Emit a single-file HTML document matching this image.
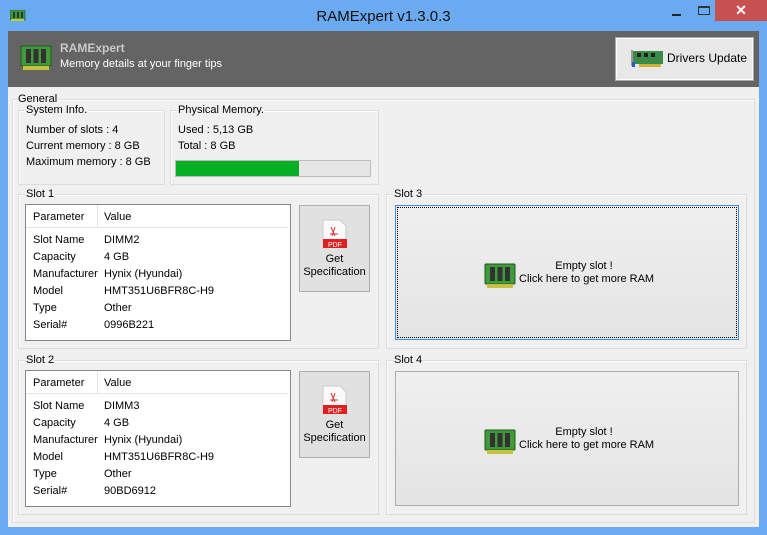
<!DOCTYPE html><html><head><style>
*{margin:0;padding:0;box-sizing:border-box}
body{width:767px;height:535px;background:#6aaaf0;font-family:"Liberation Sans",Arial,sans-serif;font-size:11px;color:#000;position:relative;overflow:hidden}
.a{position:absolute}
.grp{position:absolute;border:1px solid #dcdcdc;box-shadow:inset 1px 1px 0 #fff}
.lbl{position:absolute;background:#f0f0f0;padding:0 1px;line-height:12px;top:-7px;left:6px}
.t{position:absolute;white-space:nowrap;line-height:13px}
.lv{position:absolute;background:#fff;border:1px solid #828790}
.btn{position:absolute;border:1px solid #adadad;background:#e1e1e1;text-align:center}
.empty{position:absolute;border:1px solid #adadad;background:linear-gradient(#efefef,#e4e4e4)}
</style></head><body>
<svg class="a" style="left:10px;top:10px" width="16" height="12"><rect x="0" y="0" width="15" height="10" fill="#3a9a3a" stroke="#235" stroke-width=".5"/><rect x="3" y="2" width="2" height="6" fill="#333"/><rect x="7" y="2" width="2" height="6" fill="#333"/><rect x="11" y="2" width="2" height="6" fill="#333"/><rect x="1" y="9" width="13" height="2" fill="#c8c840"/></svg>
<div class="t" style="left:0;width:767px;text-align:center;top:8px;font-size:15px;line-height:17px;color:#111">RAMExpert v1.3.0.3</div>
<div class="a" style="left:672px;top:14px;width:9px;height:2px;background:#222"></div>
<div class="a" style="left:698px;top:6px;width:12px;height:9px;border:1px solid #333;border-top-width:2px"></div>
<div class="a" style="left:715px;top:0;width:52px;height:21px;background:#c75050;color:#fff;text-align:center;font-size:14px;line-height:21px;font-weight:bold">✕</div>
<div class="a" style="left:8px;top:31px;width:751px;height:496px;background:#f0f0f0"></div>
<div class="a" style="left:8px;top:31px;width:751px;height:56px;background:#646464"></div>
<svg class="a" style="left:20px;top:45px" width="32" height="26"><rect x="1" y="1" width="30" height="20" rx="1" fill="#3f9a3a" stroke="#1e5a1e"/><rect x="6" y="4" width="5" height="14" fill="#333"/><rect x="13.5" y="4" width="5" height="14" fill="#333"/><rect x="21" y="4" width="5" height="14" fill="#333"/><rect x="3" y="21" width="26" height="4" fill="#c8c040"/></svg>
<div class="t" style="left:60px;top:42px;font-weight:bold;color:#c8c8c8;font-size:12px">RAMExpert</div>
<div class="t" style="left:60px;top:58px;color:#fff">Memory details at your finger tips</div>
<div class="a" style="left:616px;top:38px;width:137px;height:42px;border:1px solid #fff;outline:1px solid #aaa;background:#e8e8e8"></div>
<svg class="a" style="left:631px;top:48px" width="34" height="22"><rect x="2" y="3" width="30" height="13" fill="#3a8a4a"/><rect x="6" y="5" width="4" height="4" fill="#222"/><rect x="13" y="5" width="4" height="4" fill="#222"/><rect x="20" y="5" width="4" height="4" fill="#222"/><rect x="0" y="2" width="2" height="16" fill="#999"/><rect x="8" y="16" width="22" height="3" fill="#d4b030"/><rect x="1" y="14" width="3" height="5" fill="#35c"/></svg>
<div class="t" style="left:667px;top:52px;font-size:12px">Drivers Update</div>

<div class="grp" style="left:12px;top:99px;width:743px;height:424px"><div class="lbl" style="left:4px">General</div></div>
<div class="grp" style="left:18px;top:110px;width:147px;height:75px"><div class="lbl">System Info.</div></div>
<div class="t" style="left:26px;top:124px">Number of slots : 4</div>
<div class="t" style="left:26px;top:140px">Current memory : 8 GB</div>
<div class="t" style="left:26px;top:156px">Maximum memory : 8 GB</div>
<div class="grp" style="left:170px;top:110px;width:209px;height:75px"><div class="lbl">Physical Memory.</div></div>
<div class="t" style="left:178px;top:124px">Used : 5,13 GB</div>
<div class="t" style="left:178px;top:140px">Total : 8 GB</div>
<div class="a" style="left:175px;top:160px;width:196px;height:17px;background:#e6e6e6;border:1px solid #bcbcbc"><div style="width:123px;height:15px;background:#06b025"></div></div>

<div class="grp" style="left:18px;top:194px;width:361px;height:155px"><div class="lbl">Slot 1</div></div>
<div class="lv" style="left:25px;top:204px;width:266px;height:137px">
<div class="a" style="left:0;top:0;width:262px;height:23px;border-bottom:1px solid #e5e5e5"></div>
<div class="a" style="left:71px;top:0;width:1px;height:23px;background:#e5e5e5"></div>
<div class="t" style="left:7px;top:6px">Parameter</div><div class="t" style="left:78px;top:6px">Value</div>
<div class="t" style="left:7px;top:29px">Slot Name</div><div class="t" style="left:78px;top:29px">DIMM2</div>
<div class="t" style="left:7px;top:46px">Capacity</div><div class="t" style="left:78px;top:46px">4 GB</div>
<div class="t" style="left:7px;top:63px">Manufacturer</div><div class="t" style="left:78px;top:63px">Hynix (Hyundai)</div>
<div class="t" style="left:7px;top:80px">Model</div><div class="t" style="left:78px;top:80px">HMT351U6BFR8C-H9</div>
<div class="t" style="left:7px;top:97px">Type</div><div class="t" style="left:78px;top:97px">Other</div>
<div class="t" style="left:7px;top:114px">Serial#</div><div class="t" style="left:78px;top:114px">0996B221</div>
</div>
<div class="btn" style="left:299px;top:205px;width:71px;height:87px">
<svg style="position:absolute;left:22px;top:13px" width="26" height="30"><path d="M1 1h17l6 6v16H1z" fill="#fafafa" stroke="#ccc"/><path d="M9 8l4 9M13 8l-3 9M8 15h8" stroke="#d33" fill="none"/><rect x="1" y="20" width="24" height="9" fill="#e02020"/><text x="13" y="28" font-size="7" fill="#fff" text-anchor="middle" font-family="Liberation Sans">PDF</text></svg>
<div class="t" style="left:0;width:69px;top:47px">Get<br>Specification</div></div>

<div class="grp" style="left:386px;top:194px;width:361px;height:155px"><div class="lbl">Slot 3</div></div>
<div class="empty" style="left:395px;top:205px;width:344px;height:135px;border:1px solid #3c8ce0;outline:1px dotted #000;outline-offset:-3px"></div>
<svg class="a" style="left:484px;top:263px" width="32" height="26"><rect x="1" y="1" width="30" height="20" rx="1" fill="#3f9a3a" stroke="#1e5a1e"/><rect x="6" y="4" width="5" height="14" fill="#333"/><rect x="13.5" y="4" width="5" height="14" fill="#333"/><rect x="21" y="4" width="5" height="14" fill="#333"/><rect x="3" y="21" width="26" height="4" fill="#c8c040"/></svg>
<div class="t" style="left:519px;top:260px;width:130px;text-align:center">Empty slot !<br>Click here to get more RAM</div>

<div class="grp" style="left:18px;top:360px;width:361px;height:155px"><div class="lbl">Slot 2</div></div>
<div class="lv" style="left:25px;top:370px;width:266px;height:137px">
<div class="a" style="left:0;top:0;width:262px;height:23px;border-bottom:1px solid #e5e5e5"></div>
<div class="a" style="left:71px;top:0;width:1px;height:23px;background:#e5e5e5"></div>
<div class="t" style="left:7px;top:6px">Parameter</div><div class="t" style="left:78px;top:6px">Value</div>
<div class="t" style="left:7px;top:29px">Slot Name</div><div class="t" style="left:78px;top:29px">DIMM3</div>
<div class="t" style="left:7px;top:46px">Capacity</div><div class="t" style="left:78px;top:46px">4 GB</div>
<div class="t" style="left:7px;top:63px">Manufacturer</div><div class="t" style="left:78px;top:63px">Hynix (Hyundai)</div>
<div class="t" style="left:7px;top:80px">Model</div><div class="t" style="left:78px;top:80px">HMT351U6BFR8C-H9</div>
<div class="t" style="left:7px;top:97px">Type</div><div class="t" style="left:78px;top:97px">Other</div>
<div class="t" style="left:7px;top:114px">Serial#</div><div class="t" style="left:78px;top:114px">90BD6912</div>
</div>
<div class="btn" style="left:299px;top:371px;width:71px;height:87px">
<svg style="position:absolute;left:22px;top:13px" width="26" height="30"><path d="M1 1h17l6 6v16H1z" fill="#fafafa" stroke="#ccc"/><path d="M9 8l4 9M13 8l-3 9M8 15h8" stroke="#d33" fill="none"/><rect x="1" y="20" width="24" height="9" fill="#e02020"/><text x="13" y="28" font-size="7" fill="#fff" text-anchor="middle" font-family="Liberation Sans">PDF</text></svg>
<div class="t" style="left:0;width:69px;top:47px">Get<br>Specification</div></div>

<div class="grp" style="left:386px;top:360px;width:361px;height:155px"><div class="lbl">Slot 4</div></div>
<div class="empty" style="left:395px;top:371px;width:344px;height:135px"></div>
<svg class="a" style="left:484px;top:429px" width="32" height="26"><rect x="1" y="1" width="30" height="20" rx="1" fill="#3f9a3a" stroke="#1e5a1e"/><rect x="6" y="4" width="5" height="14" fill="#333"/><rect x="13.5" y="4" width="5" height="14" fill="#333"/><rect x="21" y="4" width="5" height="14" fill="#333"/><rect x="3" y="21" width="26" height="4" fill="#c8c040"/></svg>
<div class="t" style="left:519px;top:426px;width:130px;text-align:center">Empty slot !<br>Click here to get more RAM</div>
</body></html>
